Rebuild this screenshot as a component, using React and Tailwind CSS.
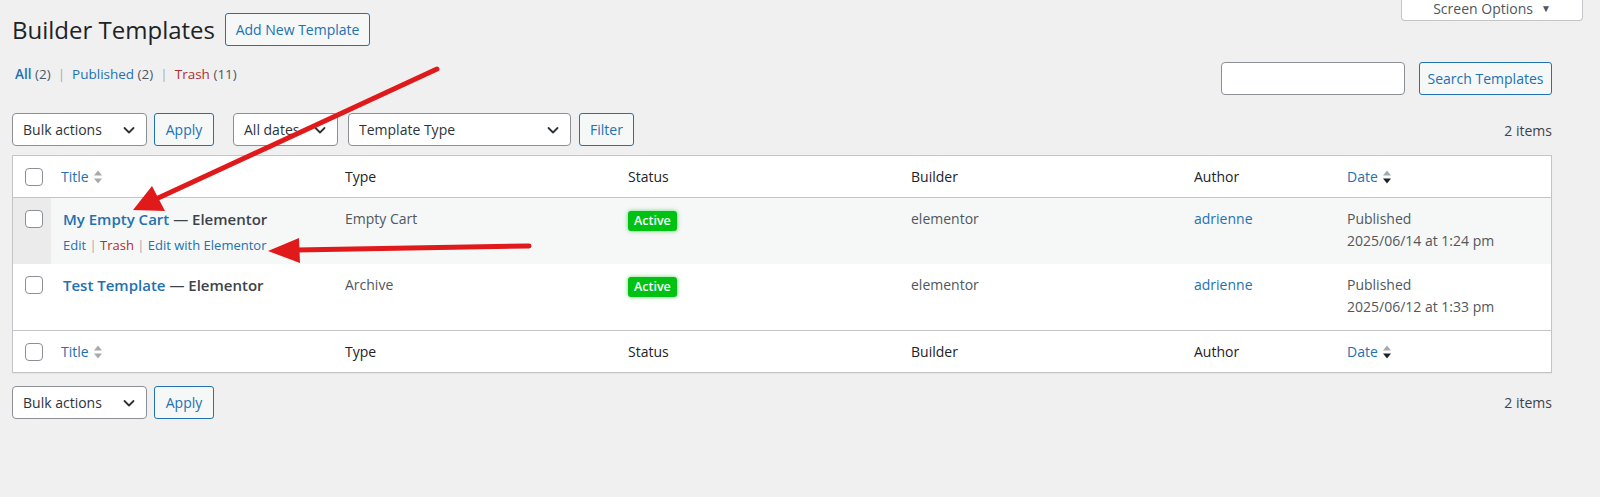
import React from "react";

const font = { fontFamily: '"Open Sans", "Noto Sans", sans-serif' };

function Chevron({ className = "" }) {
  return (
    <svg width="16" height="16" viewBox="0 0 16 16" className={className}>
      <path d="M3.5 6l4.5 4.5L12.5 6" fill="none" stroke="#2c3338" strokeWidth="1.8" strokeLinecap="round" strokeLinejoin="round" />
    </svg>
  );
}

function SortIcon({ active }) {
  return (
    <svg width="10" height="18" viewBox="0 0 10 18" className="ml-1">
      <path d="M1 7.5L5 2.5L9 7.5Z" fill="#a7aaad" />
      <path d="M1 10.5L5 15.5L9 10.5Z" fill={active ? "#1d2327" : "#a7aaad"} />
    </svg>
  );
}

function Checkbox() {
  return <div className="w-[18px] h-[18px] rounded-[4px] border border-[#8c8f94] bg-white" />;
}

function Select({ label, w }) {
  return (
    <div className={`${w} h-[33px] bg-white border border-[#8c8f94] rounded-[4px] flex items-center justify-between pl-[10px] pr-[9px] text-[14px] text-[#2c3338]`}>
      <span className="whitespace-nowrap overflow-hidden">{label}</span>
      <Chevron className="shrink-0" />
    </div>
  );
}

function SecButton({ children, w }) {
  return (
    <div className={`${w} h-[33px] bg-[#f6f7f7] border border-[#2271b1] rounded-[3px] flex items-center justify-center text-[14px] text-[#2271b1] whitespace-nowrap`}>
      {children}
    </div>
  );
}

const cols = "grid grid-cols-[38px_284px_283px_283px_283px_153px_1fr]";

function HeaderRow({ top }) {
  return (
    <div className={`${cols} h-[42px] items-center text-[14px] text-[#1d2327] ${top ? "border-b" : "border-t"} border-[#c3c4c7]`}>
      <div className="flex justify-center pl-[4px]"><Checkbox /></div>
      <div className="pl-[10px] flex items-center text-[#2271b1]">Title<SortIcon /></div>
      <div className="pl-[10px]">Type</div>
      <div className="pl-[10px]">Status</div>
      <div className="pl-[10px]">Builder</div>
      <div className="pl-[10px]">Author</div>
      <div className="pl-[10px] flex items-center text-[#2271b1]">Date<SortIcon active /></div>
    </div>
  );
}

function Badge() {
  return (
    <span className="inline-flex items-center h-[20px] px-[6px] rounded-[3px] bg-[#00c213] text-white text-[12.5px] font-semibold shadow-[0_0_4px_rgba(0,190,20,0.6)]">
      Active
    </span>
  );
}

function DataRow({ title, type, date, striped, actions }) {
  return (
    <div className={`${cols} h-[66px] text-[14px] text-[#50575e] ${striped ? "bg-[#f6f7f7]" : "bg-white"}`}>
      <div className={`flex justify-center pt-[12px] pl-[4px] ${striped ? "bg-[#ebebec]" : ""}`}><Checkbox /></div>
      <div className="pl-[12px] pt-[9px]">
        <div className="text-[15px] font-semibold leading-[24px] whitespace-nowrap">
          <span className="text-[#2271b1]">{title}</span>
          <span className="text-[#3c434a]"> — Elementor</span>
        </div>
        {actions && (
          <div className="text-[13px] leading-[20px] mt-[4px] whitespace-nowrap">
            <span className="text-[#2271b1]">Edit</span>
            <span className="text-[#a7aaad]"> | </span>
            <span className="text-[#b32d2e]">Trash</span>
            <span className="text-[#a7aaad]"> | </span>
            <span className="text-[#2271b1]">Edit with Elementor</span>
          </div>
        )}
      </div>
      <div className="pl-[10px] pt-[10px] leading-[22px]">{type}</div>
      <div className="pl-[10px] pt-[11px]"><Badge /></div>
      <div className="pl-[10px] pt-[10px] leading-[22px]">elementor</div>
      <div className="pl-[10px] pt-[10px] leading-[22px] text-[#2271b1]">adrienne</div>
      <div className="pl-[10px] pt-[10px] leading-[22px]">
        <div>Published</div>
        <div>{date}</div>
      </div>
    </div>
  );
}

export default function App() {
  return (
    <div style={font} className="relative w-[1600px] h-[497px] bg-[#f0f0f1] overflow-hidden">
      {/* Screen options */}
      <div className="flex justify-end pr-[17px]">
        <div className="w-[182px] h-[24px] bg-white border border-t-0 border-[#c3c4c7] rounded-b-[4px] flex items-center justify-center gap-[8px] text-[14px] text-[#50575e] -mt-[3px]">
          <span>Screen Options</span>
          <span className="text-[10px] text-[#50575e]">▼</span>
        </div>
      </div>

      <div className="px-[12px] pr-[48px]">
        {/* Title row */}
        <div className="flex items-center gap-[10px] -mt-[8px]">
          <h1 className="text-[24px] text-[#1d2327] leading-[33px]">Builder Templates</h1>
          <SecButton w="w-[145px]">Add New Template</SecButton>
        </div>

        {/* Views + search */}
        <div className="flex justify-between items-start mt-[16px]">
          <div className="text-[13.5px] text-[#50575e] mt-[2px] pl-[3px] whitespace-nowrap">
            <span className="text-[#2271b1] font-semibold">All</span> (2)
            <span className="text-[#a7aaad] mx-[7px]">|</span>
            <span className="text-[#2271b1]">Published</span> (2)
            <span className="text-[#a7aaad] mx-[7px]">|</span>
            <span className="text-[#b32d2e]">Trash</span> (11)
          </div>
          <div className="flex gap-[14px]">
            <div className="w-[184px] h-[33px] bg-white border border-[#8c8f94] rounded-[4px]" />
            <SecButton w="w-[133px]">Search Templates</SecButton>
          </div>
        </div>

        {/* Filters */}
        <div className="flex items-center mt-[18px]">
          <Select label="Bulk actions" w="w-[135px]" />
          <div className="ml-[7px]"><SecButton w="w-[60px]">Apply</SecButton></div>
          <div className="ml-[19px]"><Select label="All dates" w="w-[105px]" /></div>
          <div className="ml-[10px]"><Select label="Template Type" w="w-[223px]" /></div>
          <div className="ml-[8px]"><SecButton w="w-[55px]">Filter</SecButton></div>
          <div className="ml-auto text-[14px] text-[#3c434a] mt-[1px]">2 items</div>
        </div>

        {/* Table */}
        <div className="mt-[9px] bg-white border border-[#c3c4c7] shadow-[0_1px_1px_rgba(0,0,0,0.04)]">
          <HeaderRow top />
          <DataRow title="My Empty Cart" type="Empty Cart" date="2025/06/14 at 1:24 pm" striped actions />
          <DataRow title="Test Template" type="Archive" date="2025/06/12 at 1:33 pm" />
          <HeaderRow />
        </div>

        {/* Bottom */}
        <div className="flex items-center mt-[13px]">
          <Select label="Bulk actions" w="w-[135px]" />
          <div className="ml-[7px]"><SecButton w="w-[60px]">Apply</SecButton></div>
          <div className="ml-auto text-[14px] text-[#3c434a]">2 items</div>
        </div>
      </div>

      {/* Annotation arrows */}
      <svg className="absolute inset-0 pointer-events-none" width="1600" height="497" viewBox="0 0 1600 497">
        <line x1="437" y1="69" x2="156" y2="199" stroke="#e0191b" strokeWidth="5" strokeLinecap="round" />
        <polygon points="133,210 165,211 152,186" fill="#e0191b" />
        <line x1="529" y1="246" x2="296" y2="250" stroke="#e0191b" strokeWidth="5" strokeLinecap="round" />
        <polygon points="268,251 299,238 300,263" fill="#e0191b" />
      </svg>
    </div>
  );
}
